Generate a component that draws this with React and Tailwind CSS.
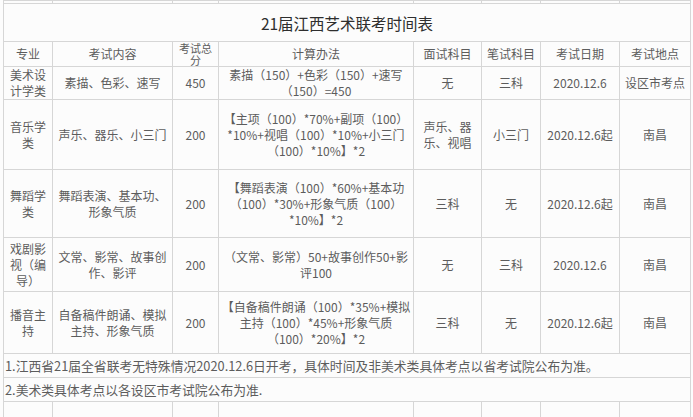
const cols = [49, 120, 46, 195, 68, 59, 79, 71];

const rows = [
  {
    h: 30,
    cells: [
      ["美术设", "计学类"],
      ["素描、色彩、速写"],
      ["450"],
      ["素描（150）+色彩（150）+速写", "（150）=450"],
      ["无"],
      ["三科"],
      ["2020.12.6"],
      ["设区市考点"],
    ],
  },
  {
    h: 70,
    cells: [
      ["音乐学", "类"],
      ["声乐、器乐、小三门"],
      ["200"],
      ["【主项（100）*70%+副项（100）", "*10%+视唱（100）*10%+小三门", "（100）*10%】*2"],
      ["声乐、器", "乐、视唱"],
      ["小三门"],
      ["2020.12.6起"],
      ["南昌"],
    ],
  },
  {
    h: 68,
    cells: [
      ["舞蹈学", "类"],
      ["舞蹈表演、基本功、", "形象气质"],
      ["200"],
      ["【舞蹈表演（100）*60%+基本功", "（100）*30%+形象气质（100）", "*10%】*2"],
      ["三科"],
      ["无"],
      ["2020.12.6起"],
      ["南昌"],
    ],
  },
  {
    h: 54,
    cells: [
      ["戏剧影", "视（编", "导）"],
      ["文常、影常、故事创", "作、影评"],
      ["200"],
      ["（文常、影常）50+故事创作50+影", "评100"],
      ["无"],
      ["三科"],
      ["2020.12.6"],
      ["南昌"],
    ],
  },
  {
    h: 62,
    cells: [
      ["播音主", "持"],
      ["自备稿件朗诵、模拟", "主持、形象气质"],
      ["200"],
      ["【自备稿件朗诵（100）*35%+模拟", "主持（100）*45%+形象气质", "（100）*20%】*2"],
      ["三科"],
      ["无"],
      ["2020.12.6起"],
      ["南昌"],
    ],
  },
];

const headers = [["专业"], ["考试内容"], ["考试总", "分"], ["计算办法"], ["面试科目"], ["笔试科目"], ["考试日期"], ["考试地点"]];

function Lines({ lines }) {
  return lines.map((l, i) => (
    <div key={i} className="whitespace-nowrap">
      {l}
    </div>
  ));
}

function EmptyRow({ h }) {
  return (
    <tr style={{ height: h }}>
      {cols.map((_, i) => (
        <td key={i} className="border border-[#d6d6d6]" />
      ))}
    </tr>
  );
}

export default function App() {
  return (
    <div
      className="w-[693px] h-[417px] overflow-hidden bg-[#fcfcfc] pl-[3px] text-[#5c5c5c]"
      style={{ fontFamily: '"Noto Sans CJK SC", "Noto Sans", sans-serif' }}
    >
      <table className="table-fixed border-collapse w-[688px] border-l border-l-[#9a9a9a] text-[12px] leading-[16px]">
        <colgroup>
          {cols.map((w, i) => (
            <col key={i} style={{ width: w }} />
          ))}
        </colgroup>
        <tbody>
          <EmptyRow h={3} />
          <tr className="h-[38px]">
            <td colSpan={8} className="border border-[#d6d6d6] text-center text-[15.5px] text-[#2e2e2e] font-normal">
              21届江西艺术联考时间表
            </td>
          </tr>
          <tr className="h-[25px]">
            {headers.map((c, i) => (
              <td key={i} className={`border border-[#d6d6d6] text-center align-middle ${i === 2 ? "text-[11px] leading-[12px]" : ""}`}>
                <Lines lines={c} />
              </td>
            ))}
          </tr>
          {rows.map((r, ri) => (
            <tr key={ri} style={{ height: r.h }}>
              {r.cells.map((c, i) => (
                <td key={i} className="border border-[#d6d6d6] text-center align-middle">
                  <Lines lines={c} />
                </td>
              ))}
            </tr>
          ))}
          <tr className="h-[24px]">
            <td colSpan={8} className="border border-[#d6d6d6] text-left pl-[1px] whitespace-nowrap text-[12.8px]">
              1.江西省21届全省联考无特殊情况2020.12.6日开考，具体时间及非美术类具体考点以省考试院公布为准。
            </td>
          </tr>
          <tr className="h-[24px]">
            <td colSpan={8} className="border border-[#d6d6d6] text-left pl-[1px] whitespace-nowrap text-[12.8px]">
              2.美术类具体考点以各设区市考试院公布为准.
            </td>
          </tr>
          <EmptyRow h={20} />
        </tbody>
      </table>
    </div>
  );
}
